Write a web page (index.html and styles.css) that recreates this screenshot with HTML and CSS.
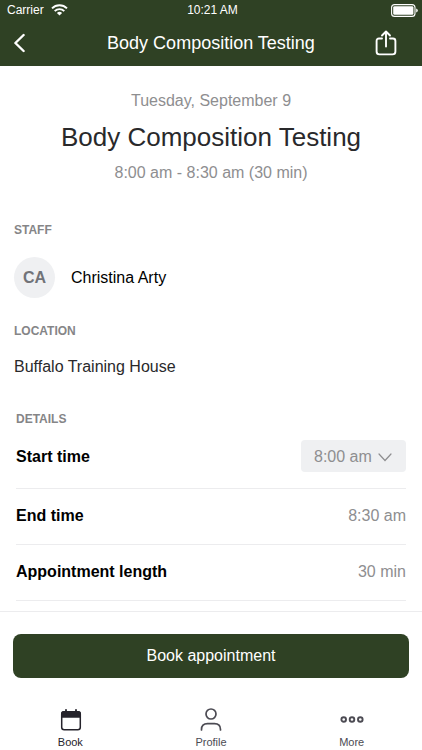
FILE: index.html
```
<!DOCTYPE html>
<html lang="en">
<head>
  <meta charset="UTF-8" />
  <meta name="viewport" content="width=device-width, initial-scale=1.0" />
  <title>Body Composition Testing</title>
  <link rel="stylesheet" href="styles.css">
</head>
<body>
  <header class="header">
    <div class="status-bar">
      <div class="carrier">
        <span>Carrier</span>
        <svg width="17" height="12" viewBox="0 0 17 12" fill="none" stroke="#fff" stroke-width="1.9">
          <path d="M1 4.3a10.6 10.6 0 0 1 15 0" />
          <path d="M3.7 7.1a6.8 6.8 0 0 1 9.6 0" />
          <path d="M8.5 11.6L5.9 9a3.7 3.7 0 0 1 5.2 0z" fill="#fff" stroke="none" />
        </svg>
      </div>
      <span class="clock">10:21 AM</span>
      <svg class="battery" width="27" height="13" viewBox="0 0 27 13">
        <rect x="0.6" y="0.6" width="23.4" height="11.8" rx="3" fill="none" stroke="#fff" stroke-width="1.1" />
        <rect x="2.2" y="2.2" width="20.2" height="8.6" rx="1.4" fill="#fff" />
        <path d="M25.2 4.4q1.6.6 1.6 2.1t-1.6 2.1z" fill="#fff" />
      </svg>
    </div>
    <div class="nav">
      <button class="icon-button" type="button" aria-label="Back">
        <svg width="12" height="20" viewBox="0 0 12 20" fill="none" stroke="#fff" stroke-width="2.4" stroke-linecap="round" stroke-linejoin="round">
          <path d="M9.6 2L1.4 10l8.2 8" />
        </svg>
      </button>
      <div class="nav-title">Body Composition Testing</div>
      <button class="icon-button icon-button-right" type="button" aria-label="Share">
        <svg width="22" height="26" viewBox="0 0 22 26" fill="none" stroke="#fff" stroke-width="1.9" stroke-linecap="round" stroke-linejoin="round">
          <path d="M7 8.5H4Q1.6 8.5 1.6 11v10.5q0 2.9 2.9 2.9h13q2.9 0 2.9-2.9V11q0-2.5-2.4-2.5h-3" />
          <path d="M11 16.5V2" />
          <path d="M7 5.5l4-4 4 4" />
        </svg>
      </button>
    </div>
  </header>

  <main class="content">
    <section class="summary">
      <p class="muted">Tuesday, September 9</p>
      <h1>Body Composition Testing</h1>
      <p class="muted">8:00 am - 8:30 am (30 min)</p>
    </section>

    <section class="staff">
      <h2>STAFF</h2>
      <div class="person">
        <span class="avatar">CA</span>
        <span>Christina Arty</span>
      </div>
    </section>

    <section class="location">
      <h2>LOCATION</h2>
      <p>Buffalo Training House</p>
    </section>

    <section class="details">
      <h2>DETAILS</h2>
      <div class="row">
        <label for="startTime">Start time</label>
        <div class="select-wrap">
          <select id="startTime">
            <option selected>8:00 am</option>
            <option>8:30 am</option>
            <option>9:00 am</option>
          </select>
          <svg class="chevron" width="14" height="9" viewBox="0 0 14 9" fill="none" stroke="#8e8e90" stroke-width="1.2" stroke-linecap="round">
            <path d="M1 1l6 6.5L13 1" />
          </svg>
        </div>
      </div>
      <div class="row">
        <strong>End time</strong>
        <span class="muted">8:30 am</span>
      </div>
      <div class="row">
        <strong>Appointment length</strong>
        <span class="muted">30 min</span>
      </div>
    </section>
  </main>

  <footer class="footer">
    <button class="book-button" type="button">Book appointment</button>
    <nav class="tabs">
      <a class="tab active" href="#book">
        <svg width="24" height="24" viewBox="0 0 24 24">
          <path d="M8 1.8v3M18 1.8v3" stroke="#25232b" stroke-width="1.8" stroke-linecap="round" />
          <rect x="3.7" y="3.7" width="18.6" height="18.1" rx="2.5" fill="none" stroke="#25232b" stroke-width="1.5" />
          <path d="M3 9.8V6q0-3 3-3h14q3 0 3 3v3.8z" fill="#25232b" />
        </svg>
        Book
      </a>
      <a class="tab" href="#profile">
        <svg width="24" height="24" viewBox="0 0 24 24" fill="none" stroke="#4c4b53" stroke-width="1.7" stroke-linecap="round">
          <circle cx="12" cy="6" r="5" />
          <path d="M2.5 22v-.5q0-5.8 6-5.8h7q6 0 6 5.8v.5" />
        </svg>
        Profile
      </a>
      <a class="tab" href="#more">
        <svg width="24" height="24" viewBox="0 0 24 24" fill="none" stroke="#4c4b53" stroke-width="1.9">
          <circle cx="3.7" cy="11.5" r="2.3" />
          <circle cx="12" cy="11.5" r="2.3" />
          <circle cx="20.3" cy="11.5" r="2.3" />
        </svg>
        More
      </a>
    </nav>
  </footer>
</body>
</html>
```
FILE: styles.css
```
* {
  box-sizing: border-box;
}
body {
  margin: 0;
  min-height: 100vh;
  display: flex;
  flex-direction: column;
  font-family: "Liberation Sans", Arial, sans-serif;
  font-size: 16px;
  line-height: 20px;
  background: #fff;
  color: #000;
}
h1, h2, p {
  margin: 0;
}
button, select {
  font: inherit;
  border: none;
  cursor: pointer;
}
svg {
  display: block;
}
.header {
  background: #2f4124;
  color: #fff;
}
.status-bar {
  display: grid;
  grid-template-columns: 1fr auto 1fr;
  align-items: center;
  height: 20px;
  padding: 0 4px 0 7px;
  font-size: 12px;
}
.carrier {
  display: flex;
  align-items: center;
  gap: 7px;
}
.battery {
  justify-self: end;
}
.nav {
  display: grid;
  grid-template-columns: 48px 1fr 48px;
  align-items: center;
  height: 46px;
  padding: 0 14px;
}
.nav-title {
  font-size: 18px;
  text-align: center;
}
.icon-button {
  background: none;
  padding: 0;
  justify-self: start;
}
.icon-button-right {
  justify-self: end;
  margin-right: 11px;
}
.content {
  flex: 1;
  padding: 0 14px;
}
.summary {
  padding-top: 25px;
  text-align: center;
}
.summary h1 {
  margin: 10px 0;
  font-size: 26px;
  font-weight: normal;
  line-height: 32px;
  color: #29292b;
}
.muted {
  color: #8e8e90;
}
h2 {
  font-size: 12px;
  line-height: 14px;
  color: #858587;
}
.staff {
  margin-top: 40px;
}
.person {
  display: flex;
  align-items: center;
  gap: 16px;
  margin-top: 20px;
}
.avatar {
  width: 41px;
  height: 41px;
  border-radius: 50%;
  background: #eff0f2;
  color: #717378;
  font-weight: bold;
  line-height: 41px;
  text-align: center;
}
.location {
  margin-top: 26px;
}
.location p {
  margin-top: 19px;
  color: #29292b;
}
.details {
  margin-top: 35px;
  padding: 0 2px;
}
.row {
  display: flex;
  justify-content: space-between;
  align-items: center;
  padding: 14px 0 16px;
  line-height: 25px;
  border-bottom: 1px solid #ececee;
}
.row label {
  font-weight: bold;
}
.select-wrap {
  position: relative;
}
.select-wrap select {
  appearance: none;
  width: 105px;
  height: 32px;
  padding: 0 32px 0 13px;
  border-radius: 4px;
  background: #eff0f2;
  color: #8e8e90;
}
.chevron {
  position: absolute;
  right: 14px;
  top: 13px;
  pointer-events: none;
}
.footer {
  border-top: 1px solid #ececee;
  padding: 22px 13px 0;
}
.book-button {
  display: block;
  width: 100%;
  height: 44px;
  border-radius: 8px;
  background: #2f4124;
  color: #fff;
}
.tabs {
  display: flex;
  margin: 30px -13px 0;
}
.tab {
  flex: 1;
  display: flex;
  flex-direction: column;
  align-items: center;
  gap: 4px;
  padding-bottom: 1px;
  font-size: 11px;
  line-height: 13px;
  color: #4c4b53;
  text-decoration: none;
}
.tab.active {
  color: #25232b;
}
```
